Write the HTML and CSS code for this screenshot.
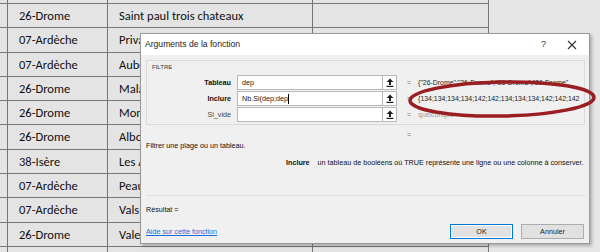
FILE: index.html
```html
<!DOCTYPE html>
<html>
<head>
    <meta charset="utf-8">
    <title>Arguments de la fonction</title>
    <link rel="stylesheet" href="styles.css">
</head>
<body>

    <div class="sheet">
        <div class="row top"><div class="hd"></div><div class="c"></div><div class="c"></div><div class="c"></div><div class="fill"></div></div>
        <div class="row"><div class="hd"></div><div class="c">26-Drome</div><div class="c">Saint paul trois chateaux</div><div class="c"></div><div class="fill"></div></div>
        <div class="row"><div class="hd"></div><div class="c">07-Ardèche</div><div class="c">Privas</div><div class="c"></div><div class="fill"></div></div>
        <div class="row"><div class="hd"></div><div class="c">07-Ardèche</div><div class="c">Aubenas</div><div class="c"></div><div class="fill"></div></div>
        <div class="row"><div class="hd"></div><div class="c">26-Drome</div><div class="c">Malataverne</div><div class="c"></div><div class="fill"></div></div>
        <div class="row"><div class="hd"></div><div class="c">26-Drome</div><div class="c">Montélimar</div><div class="c"></div><div class="fill"></div></div>
        <div class="row"><div class="hd"></div><div class="c">26-Drome</div><div class="c">Albon</div><div class="c"></div><div class="fill"></div></div>
        <div class="row"><div class="hd"></div><div class="c">38-Isère</div><div class="c">Les Avenières</div><div class="c"></div><div class="fill"></div></div>
        <div class="row"><div class="hd"></div><div class="c">07-Ardèche</div><div class="c">Peaugres</div><div class="c"></div><div class="fill"></div></div>
        <div class="row"><div class="hd"></div><div class="c">07-Ardèche</div><div class="c">Vals-les-Bains</div><div class="c"></div><div class="fill"></div></div>
        <div class="row"><div class="hd"></div><div class="c">26-Drome</div><div class="c">Valence</div><div class="c"></div><div class="fill"></div></div>
        <div class="row"><div class="hd"></div><div class="c"></div><div class="c"></div><div class="c"></div><div class="fill"></div></div>
    </div>

    <!-- boite de dialogue posee sur la feuille -->
    <div class="dlg">
        <div class="dlg-title">
            <span class="dlg-name">Arguments de la fonction</span>
            <span class="help">?</span>
            <svg class="close" width="10" height="10" viewBox="0 0 10 10">
                <path d="M1 1L9 9M9 1L1 9" stroke="#333" stroke-width="1.1" fill="none" />
            </svg>
        </div>
        <div class="dlg-body">
            <div class="group">
                <div class="group-name">FILTRE</div>
                <div class="arg">
                    <span class="lbl b">Tableau</span>
                    <span class="inp">dep</span>
                    <span class="ref"><svg width="8" height="9" viewBox="0 0 8 9"><path d="M4 0.5L7.5 4H5V7H3V4H0.5Z" fill="#222" /><rect x="0.5" y="7.8" width="7" height="1.2" fill="#222" /></svg></span>
                    <span class="eq">=</span>
                    <span class="val">{"26-Drome";"26-Drome";"26-Drome";"26-Drome"</span>
                </div>
                <div class="arg">
                    <span class="lbl b">Inclure</span>
                    <span class="inp">Nb.Si(dep;dep<i class="caret"></i></span>
                    <span class="ref"><svg width="8" height="9" viewBox="0 0 8 9"><path d="M4 0.5L7.5 4H5V7H3V4H0.5Z" fill="#222" /><rect x="0.5" y="7.8" width="7" height="1.2" fill="#222" /></svg></span>
                    <span class="eq">=</span>
                    <span class="val">{134;134;134;134;142;142;134;134;134;142;142;142</span>
                </div>
                <div class="arg">
                    <span class="lbl">Si_vide</span>
                    <span class="inp"></span>
                    <span class="ref"><svg width="8" height="9" viewBox="0 0 8 9"><path d="M4 0.5L7.5 4H5V7H3V4H0.5Z" fill="#222" /><rect x="0.5" y="7.8" width="7" height="1.2" fill="#222" /></svg></span>
                    <span class="eq">=</span>
                    <span class="val grey">quelconque</span>
                </div>
            </div>
            <div class="total"><span class="eq">=</span></div>
            <p class="desc">Filtrer une plage ou un tableau.</p>
            <div class="argdesc">
                <b>Inclure</b>
                <span>un tableau de booléens où TRUE représente une ligne ou une colonne à conserver.</span>
            </div>
            <div class="sep"></div>
            <div class="result">Résultat =</div>
            <div class="foot">
                <a href="#">Aide sur cette fonction</a>
                <div class="btns">
                    <button type="button" class="btn ok">OK</button>
                    <button type="button" class="btn">Annuler</button>
                </div>
            </div>
        </div>
    </div>

    <svg class="mark" width="600" height="252" viewBox="0 0 600 252">
        <ellipse cx="502" cy="99" rx="92" ry="17" transform="rotate(-1 502 99)" fill="none" stroke="#9a1d22" stroke-width="3.5" />
    </svg>

</body>
</html>
```

FILE: styles.css
```css
body {
    margin: 0;
    padding: 0;
    background: #e6e6e6;
    overflow: hidden;
}

/* feuille excel */
.sheet {
    height: 252px;
    overflow: hidden;
    font-family: "Carlito", "Lato", sans-serif;
    font-size: 12.5px;
    color: #111;
}

.row {
    display: grid;
    grid-template-columns: 8px 100px 205px 176px 1fr;
    height: 24.3px;
}

.row.top {
    height: 4px;
}

.row > div {
    box-sizing: border-box;
    border-bottom: 1px solid #777;
    background: #e4e4e4;
}

.row .hd,
.row .c {
    border-right: 1px solid #777;
}

.row .c {
    padding-left: 11px;
    line-height: 23px;
    white-space: nowrap;
    overflow: hidden;
}

.row .fill {
    border-bottom: none;
    background: #e6e6e6;
}

/* dialogue */
.dlg {
    position: absolute;
    left: 140px;
    top: 33px;
    width: 450px;
    height: 211px;
    box-sizing: border-box;
    border: 1px solid #9a9a9a;
    background: #f0f0f0;
    box-shadow: 2px 2px 3px rgba(0, 0, 0, 0.25);
    font-family: "Liberation Sans", Arial, sans-serif;
    font-size: 7.2px;
    line-height: 9px;
    color: #111;
    white-space: nowrap;
}

.dlg-title {
    display: flex;
    align-items: center;
    height: 21px;
    background: #fff;
    padding: 0 12px 0 4px;
}

.dlg-name {
    flex: 1;
    font-size: 8.6px;
    line-height: 11px;
    color: #222;
}

.help {
    font-size: 9px;
    line-height: 11px;
    margin-right: 21px;
    color: #333;
}

.dlg-body {
    padding: 5px 4px 0 5px;
}

.group {
    border: 1px solid #dadada;
    height: 65px;
    box-sizing: border-box;
    padding: 2px 0 0 5px;
}

.group-name {
    font-size: 6px;
    color: #333;
    height: 8px;
    line-height: 8px;
    margin-bottom: 4px;
}

.arg {
    display: flex;
    align-items: center;
    height: 15px;
    margin-bottom: 1px;
}

.lbl {
    width: 79px;
    text-align: right;
    padding-right: 6px;
    color: #444;
}

.lbl.b {
    font-weight: bold;
    color: #111;
}

.inp {
    box-sizing: border-box;
    width: 146px;
    height: 15px;
    line-height: 13px;
    background: #fff;
    border: 1px solid #b8b8b8;
    padding-left: 4px;
    color: #222;
}

.caret {
    display: inline-block;
    width: 1px;
    height: 10px;
    background: #000;
    vertical-align: middle;
}

.ref {
    box-sizing: border-box;
    width: 14px;
    height: 15px;
    background: #fff;
    border: 1px solid #b8b8b8;
    border-left: none;
    display: flex;
    align-items: center;
    justify-content: center;
}

.eq {
    color: #777;
    margin: 0 7px 0 10px;
    font-size: 7px;
}

.val {
    font-size: 6.9px;
    color: #222;
}

.val.grey {
    color: #9a9a9a;
}

.total {
    margin-top: 5px;
    height: 11px;
    padding-left: 251px;
}

.desc {
    margin: 0;
    height: 10px;
}

.argdesc {
    display: flex;
    height: 12px;
    padding: 7px 0 5px 140px;
}

.argdesc b {
    margin-right: 8px;
}

.sep {
    margin-top: 20px;
    border-top: 1px solid #dedede;
    width: 440px;
}

.result {
    height: 9px;
    padding: 9px 0 8px;
}

.foot {
    display: flex;
    align-items: center;
    justify-content: space-between;
    margin-top: 2px;
}

.foot a {
    color: #1a6ed8;
}

.btns {
    display: flex;
    gap: 8px;
    margin-right: 1px;
}

.btn {
    box-sizing: border-box;
    width: 63px;
    height: 15px;
    padding: 0;
    font-family: inherit;
    font-size: 7.2px;
    line-height: 9px;
    background: #e1e1e1;
    border: 1px solid #adadad;
    color: #222;
}

.btn.ok {
    border: 1px solid #0078d7;
    box-shadow: inset 0 0 0 1px #fff;
}

.mark {
    position: absolute;
    left: 0;
    top: 0;
    pointer-events: none;
}
```
